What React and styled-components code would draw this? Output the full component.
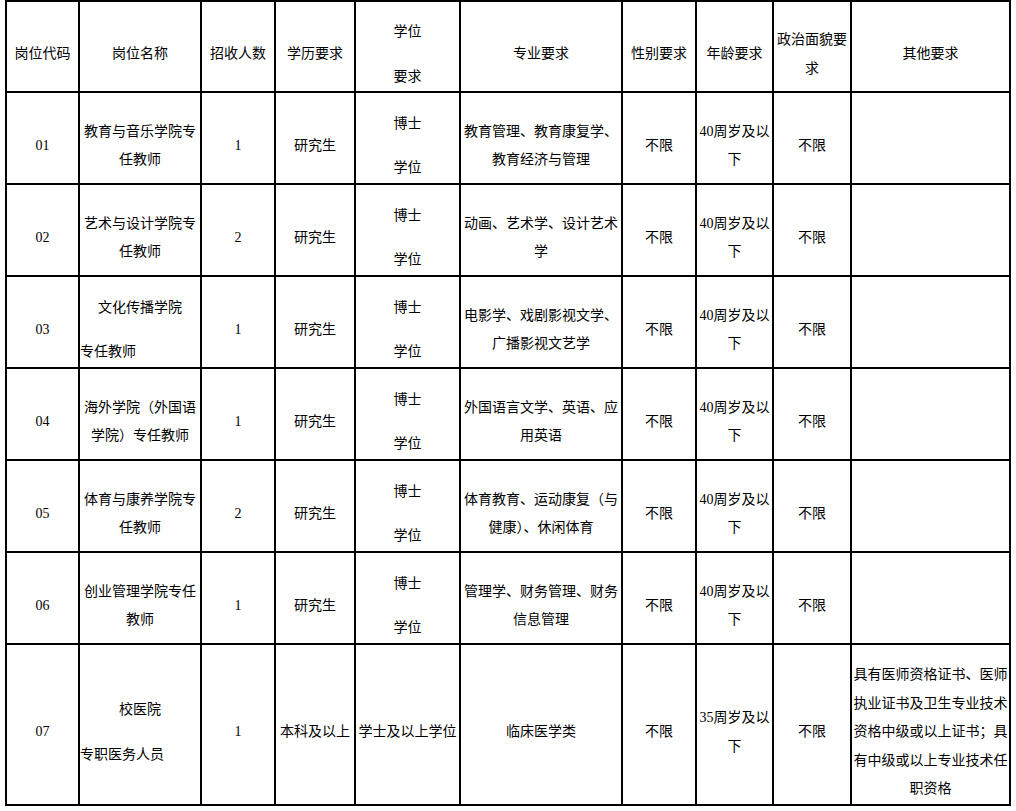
import React from "react";
import styled, { createGlobalStyle } from "styled-components";

const Page = createGlobalStyle`
  html, body {
    margin: 0;
    padding: 0;
    background: #ffffff;
  }
`;

const Table = styled.table`
  margin: 0 0 0 5px;
  width: 1006px;
  border-collapse: collapse;
  table-layout: fixed;
  font-family: "Liberation Serif", "Noto Sans CJK SC", serif;
  font-size: 14px;
  color: #000000;
`;

const Row = styled.tr`
  height: ${(props) => props.$h}px;
`;

const Cell = styled.td`
  border: 2px solid #000000;
  padding: 0;
  text-align: center;
  vertical-align: middle;
  font-weight: normal;
`;

const Para = styled.p`
  margin: 16px 0 0;
  line-height: 28.5px;
  text-align: ${(props) => props.$align || "center"};
`;

const widths = [73, 122, 74, 80, 105, 162, 74, 77, 78, 159];

const header = [
  "岗位代码",
  "岗位名称",
  "招收人数",
  "学历要求",
  ["学位", "要求"],
  "专业要求",
  "性别要求",
  "年龄要求",
  "政治面貌要求",
  "其他要求",
];

const rows = [
  {
    code: "01",
    name: "教育与音乐学院专任教师",
    count: "1",
    edu: "研究生",
    degree: ["博士", "学位"],
    major: "教育管理、教育康复学、教育经济与管理",
    age: "40周岁及以下",
    other: "",
  },
  {
    code: "02",
    name: "艺术与设计学院专任教师",
    count: "2",
    edu: "研究生",
    degree: ["博士", "学位"],
    major: "动画、艺术学、设计艺术学",
    age: "40周岁及以下",
    other: "",
  },
  {
    code: "03",
    name: [["文化传播学院", "center"], ["专任教师", "left"]],
    count: "1",
    edu: "研究生",
    degree: ["博士", "学位"],
    major: "电影学、戏剧影视文学、广播影视文艺学",
    age: "40周岁及以下",
    other: "",
  },
  {
    code: "04",
    name: "海外学院（外国语学院）专任教师",
    count: "1",
    edu: "研究生",
    degree: ["博士", "学位"],
    major: "外国语言文学、英语、应用英语",
    age: "40周岁及以下",
    other: "",
  },
  {
    code: "05",
    name: "体育与康养学院专任教师",
    count: "2",
    edu: "研究生",
    degree: ["博士", "学位"],
    major: "体育教育、运动康复（与健康）、休闲体育",
    age: "40周岁及以下",
    other: "",
  },
  {
    code: "06",
    name: "创业管理学院专任教师",
    count: "1",
    edu: "研究生",
    degree: ["博士", "学位"],
    major: "管理学、财务管理、财务信息管理",
    age: "40周岁及以下",
    other: "",
  },
  {
    code: "07",
    name: [["校医院", "center"], ["专职医务人员", "left"]],
    count: "1",
    edu: "本科及以上",
    degree: ["学士及以上学位"],
    major: "临床医学类",
    age: "35周岁及以下",
    other: "具有医师资格证书、医师执业证书及卫生专业技术资格中级或以上证书；具有中级或以上专业技术任职资格",
    tall: true,
  },
];

// a cell's content: plain text, or a list of paragraphs (text or [text, align])
function Content({ value }) {
  if (!value) return null;
  if (!Array.isArray(value)) return <Para>{value}</Para>;
  return value.map((item, i) =>
    Array.isArray(item) ? (
      <Para key={i} $align={item[1]}>
        {item[0]}
      </Para>
    ) : (
      <Para key={i}>{item}</Para>
    )
  );
}

export default function App() {
  return (
    <>
      <Page />
      <Table>
        <colgroup>
          {widths.map((w, i) => (
            <col key={i} style={{ width: w }} />
          ))}
        </colgroup>
        <thead>
          <Row $h={91}>
            {header.map((h, i) => (
              <Cell as="th" key={i}>
                <Content value={h} />
              </Cell>
            ))}
          </Row>
        </thead>
        <tbody>
          {rows.map((r) => (
            <Row key={r.code} $h={r.tall ? 161 : 92}>
              <Cell>
                <Content value={r.code} />
              </Cell>
              <Cell>
                <Content value={r.name} />
              </Cell>
              <Cell>
                <Content value={r.count} />
              </Cell>
              <Cell>
                <Content value={r.edu} />
              </Cell>
              <Cell>
                <Content value={r.degree} />
              </Cell>
              <Cell>
                <Content value={r.major} />
              </Cell>
              <Cell>
                <Content value="不限" />
              </Cell>
              <Cell>
                <Content value={r.age} />
              </Cell>
              <Cell>
                <Content value="不限" />
              </Cell>
              <Cell>
                <Content value={r.other} />
              </Cell>
            </Row>
          ))}
        </tbody>
      </Table>
    </>
  );
}
